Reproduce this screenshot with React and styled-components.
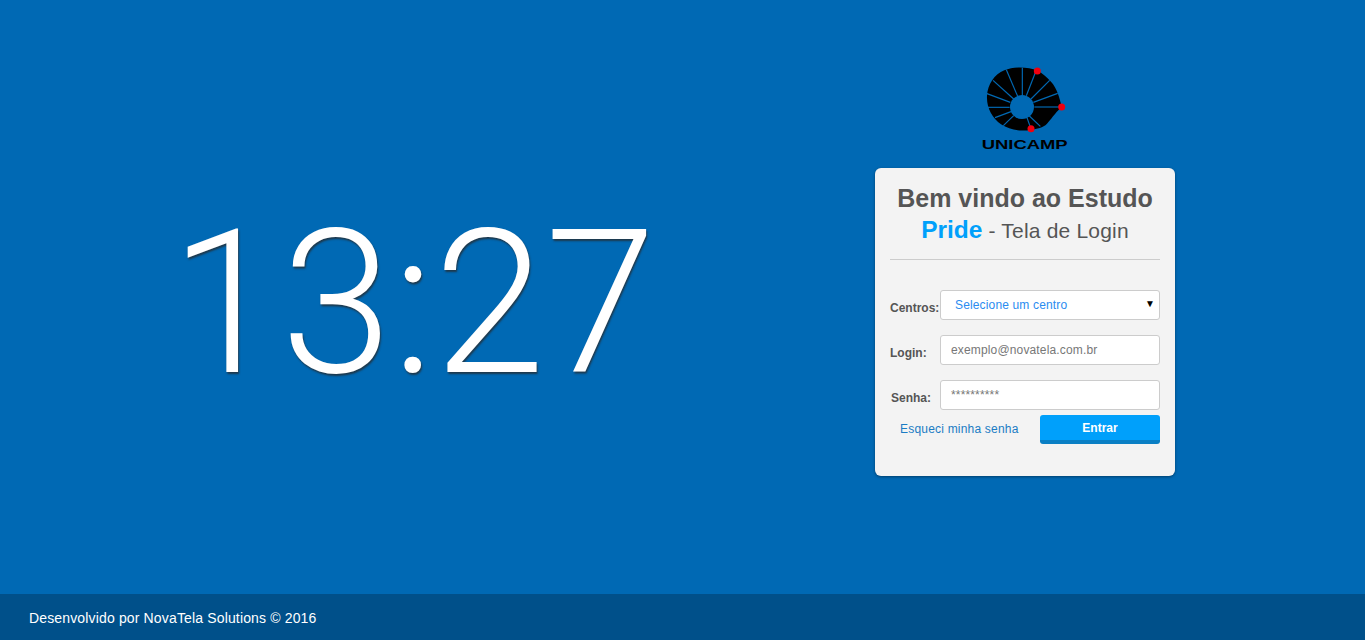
import React from 'react';
import styled, { createGlobalStyle } from 'styled-components';

const GlobalStyle = createGlobalStyle`
  html, body { margin: 0; padding: 0; height: 100%; }
  body { background: #0069b4; font-family: "Liberation Sans", Arial, sans-serif; color: #555; }
  #root { height: 100%; }
`;

const Page = styled.div`
  display: flex;
  flex-direction: column;
  height: 640px;
  overflow: hidden;
`;

const Main = styled.main`
  flex: 1;
  display: flex;
`;

const ClockPane = styled.section`
  width: 826px;
  padding-top: 184px;
  text-align: center;
`;

const Clock = styled.div`
  font-family: Roboto, "Liberation Sans", sans-serif;
  font-weight: 300;
  font-size: 200px;
  line-height: 240px;
  color: #fff;
  text-shadow: 1px 2px 2px rgba(40, 40, 40, 0.75);
`;

const LoginPane = styled.section`
  margin-left: 49px;
  width: 300px;
  padding-top: 55px;
`;

const LogoWrap = styled.div`
  display: flex;
  justify-content: center;
  height: 113px;
`;

const Card = styled.form`
  box-sizing: border-box;
  height: 308px;
  padding: 15px 15px 0;
  background: #f3f3f3;
  border-radius: 6px;
  box-shadow: 0 1px 3px rgba(0, 0, 0, 0.4);
`;

const Title = styled.h1`
  margin: 0;
  padding-bottom: 13px;
  border-bottom: 1px solid #ccc;
  text-align: center;
  font-size: 25px;
  line-height: 31px;
  font-weight: bold;
  color: #555;
`;

const Subtitle = styled.span`
  display: block;
  font-size: 21px;
  letter-spacing: 0.2px;
  font-weight: normal;
`;

const Brand = styled.strong`
  font-size: 24.5px;
  letter-spacing: 0;
  color: #00a0fb;
`;

const Fields = styled.div`
  display: flex;
  flex-direction: column;
  gap: 15px;
  padding-top: 30px;
`;

const Row = styled.div`
  display: grid;
  grid-template-columns: 50px 220px;
  align-items: center;
`;

const Label = styled.label`
  font-size: 12px;
  font-weight: bold;
  color: #555;
  padding-top: 5px;
  padding-left: ${(p) => p.$indent || 0}px;
`;

const fieldStyles = `
  box-sizing: border-box;
  width: 220px;
  height: 30px;
  background: #fff;
  border: 1px solid #ccc;
  border-radius: 3px;
  font-family: "Liberation Sans", Arial, sans-serif;
  font-size: 12px;
  outline: none;
`;

const Input = styled.input`
  ${fieldStyles}
  padding: 0 10px;
  letter-spacing: 0.15px;
  &::placeholder { color: #777; opacity: 1; }
`;

const SelectWrap = styled.div`
  position: relative;
  width: 220px;
`;

const Select = styled.select`
  ${fieldStyles}
  display: block;
  appearance: none;
  padding: 0 14px;
  color: #2a8cf0;
  letter-spacing: 0.15px;
`;

const Caret = styled.span`
  position: absolute;
  right: 5px;
  top: 7px;
  font-size: 10px;
  line-height: 14px;
  color: #000;
  pointer-events: none;
`;

const Actions = styled.div`
  display: flex;
  align-items: center;
  justify-content: space-between;
  margin-top: 5px;
  padding-left: 10px;
`;

const ForgotLink = styled.a`
  padding-bottom: 2px;
  font-size: 12px;
  letter-spacing: 0.2px;
  color: #1a7cc4;
  text-decoration: none;
  cursor: pointer;
`;

const SubmitButton = styled.button`
  box-sizing: border-box;
  width: 120px;
  height: 29px;
  padding: 0;
  background: #00a0fb;
  border: none;
  border-bottom: 4px solid #0a7fc4;
  border-radius: 3px;
  color: #fff;
  font-family: "Liberation Sans", Arial, sans-serif;
  font-size: 12px;
  font-weight: bold;
  cursor: pointer;
`;

const Footer = styled.footer`
  box-sizing: border-box;
  height: 46px;
  padding: 2px 0 0 29px;
  display: flex;
  align-items: center;
  background: #00508a;
  color: #fff;
  font-size: 14px;
  letter-spacing: 0.15px;
`;

const spokes = [
  'M172 38V122', 'M124 44L158 124', 'M84 76L146 132', 'M64 115L136 142', 'M62 157H134',
  'M90 188L138 170', 'M115 212L146 182', 'M212 50L184 122', 'M254 76L198 132',
  'M278 115L205 142', 'M290 156H208', 'M190 180L226 214', 'M186 188L198 222',
];

const UnicampLogo = () => (
  <svg width="120" height="105" viewBox="0 0 360 315" aria-label="Unicamp">
    <path
      fill="#000"
      d="M217 47C190 36 150 33 118 46C88 58 68 88 66 122C64 158 82 190 108 208C136 226 170 230 198 224C216 222 234 218 246 206C258 194 268 176 290 156C284 128 276 100 258 80C246 66 232 54 217 47Z"
    />
    <g stroke="#0069b4" strokeWidth="3.5" fill="none">
      {spokes.map((d) => (
        <path key={d} d={d} />
      ))}
    </g>
    <circle cx="171" cy="156" r="36" fill="#0069b4" />
    <circle cx="217" cy="48" r="10.5" fill="#f0000f" />
    <circle cx="290" cy="156" r="10.5" fill="#f0000f" />
    <circle cx="198" cy="221" r="10.5" fill="#f0000f" />
    <text
      x="50"
      y="282"
      textLength="258"
      lengthAdjust="spacingAndGlyphs"
      fontFamily="Liberation Sans, Arial, sans-serif"
      fontWeight="bold"
      fontSize="38"
      fill="#000"
    >
      UNICAMP
    </text>
  </svg>
);

export default function App() {
  return (
    <>
      <GlobalStyle />
      <Page>
        <Main>
          <ClockPane>
            <Clock>13:27</Clock>
          </ClockPane>
          <LoginPane>
            <LogoWrap>
              <UnicampLogo />
            </LogoWrap>
            <Card onSubmit={(e) => e.preventDefault()}>
              <Title>
                Bem vindo ao Estudo
                <Subtitle>
                  <Brand>Pride</Brand> - Tela de Login
                </Subtitle>
              </Title>
              <Fields>
                <Row>
                  <Label htmlFor="centro">Centros:</Label>
                  <SelectWrap>
                    <Select id="centro" defaultValue="">
                      <option value="">Selecione um centro</option>
                    </Select>
                    <Caret>▼</Caret>
                  </SelectWrap>
                </Row>
                <Row>
                  <Label htmlFor="login">Login:</Label>
                  <Input id="login" type="text" placeholder="exemplo@novatela.com.br" />
                </Row>
                <Row>
                  <Label htmlFor="senha" $indent={1}>Senha:</Label>
                  <Input id="senha" type="password" placeholder="**********" />
                </Row>
              </Fields>
              <Actions>
                <ForgotLink>Esqueci minha senha</ForgotLink>
                <SubmitButton type="submit">Entrar</SubmitButton>
              </Actions>
            </Card>
          </LoginPane>
        </Main>
        <Footer>Desenvolvido por NovaTela Solutions © 2016</Footer>
      </Page>
    </>
  );
}
